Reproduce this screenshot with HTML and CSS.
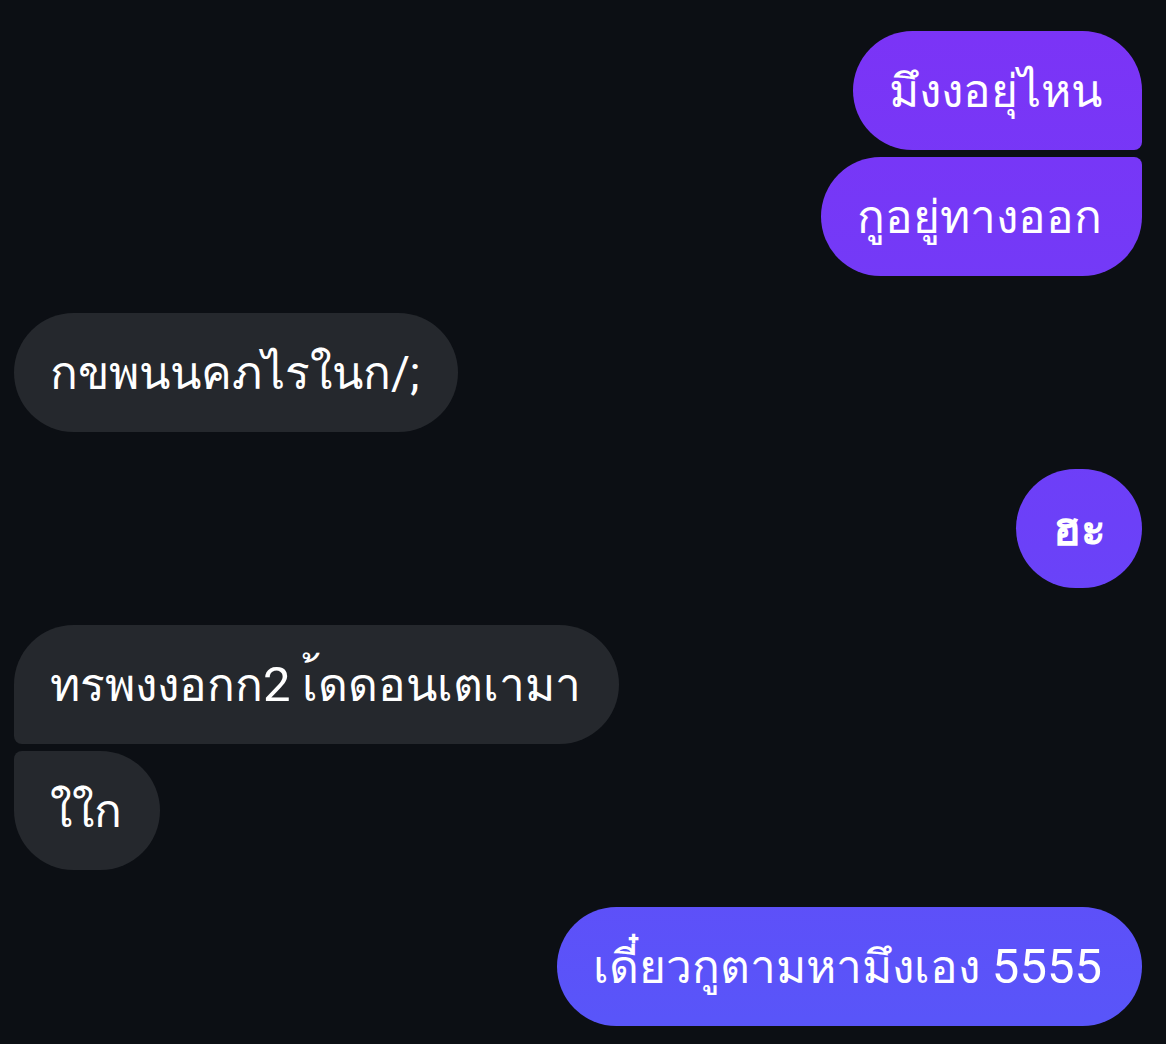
FILE: index.html
```html
<!DOCTYPE html>
<html lang="th">
<head>
    <meta charset="UTF-8">
    <meta name="viewport" content="width=device-width, initial-scale=1.0">
    <title>Chat</title>
    <link rel="stylesheet" href="styles.css">
</head>
<body>
    <div class="thread">
        <div class="group mine">
            <div class="bubble first">มึงงอยุ่ไหน</div>
            <div class="bubble last">กูอยู่ทางออก</div>
        </div>
        <div class="group theirs">
            <div class="bubble">กขพนนคภไรในก/;</div>
        </div>
        <div class="group mine">
            <div class="bubble round">ฮะ</div>
        </div>
        <div class="group theirs">
            <div class="bubble first">ทรพงงอกก<span class="num">2</span>&nbsp;เ้ดดอนเตเามา</div>
            <div class="bubble last">ใใก</div>
        </div>
        <div class="group mine">
            <div class="bubble">เดี๋ยวกูตามหามึงเอง&nbsp;<span class="num">5555</span></div>
        </div>
    </div>
</body>
</html>
```

FILE: styles.css
```css
* {
    margin: 0;
    padding: 0;
    box-sizing: border-box;
}

body {
    background: #0c0f14;
    font-family: Roboto, "Noto Sans", sans-serif;
    color: #fff;
}

.thread {
    display: flex;
    flex-direction: column;
    gap: 37px;
    padding: 31px 24px 0 14px;
}

.group {
    display: flex;
    flex-direction: column;
    gap: 7px;
}

.mine {
    align-items: flex-end;
}

.theirs {
    align-items: flex-start;
}

.bubble {
    height: 119px;
    display: flex;
    align-items: center;
    padding: 0 38px 0 36px;
    font-size: 46px;
    line-height: 1;
    border-radius: 60px;
    white-space: pre;
}

.num {
    font-size: 49px;
}

.mine .bubble {
    background: linear-gradient(180deg, #7c33f6 0%, #6c40f8 50%, #5856f9 100%) fixed;
    padding: 0 40px 0 36px;
}

.theirs .bubble {
    background: #25282d;
}

.mine .first {
    border-bottom-right-radius: 8px;
}

.mine .last {
    border-top-right-radius: 8px;
}

.theirs .first {
    border-bottom-left-radius: 8px;
}

.theirs .last {
    border-top-left-radius: 8px;
}

.mine .round {
    width: 126px;
    justify-content: center;
    padding: 0;
    font-size: 46px;
    font-weight: 700;
}
```
